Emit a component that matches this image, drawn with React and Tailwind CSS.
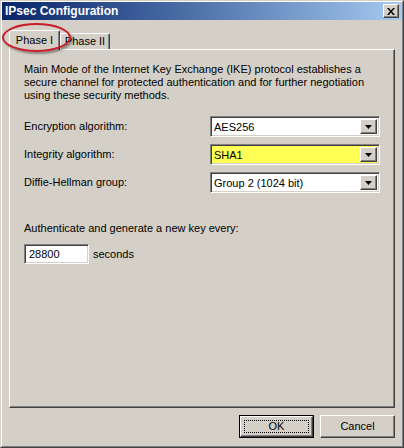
import React from 'react';

const FONT = "font-['Liberation_Sans',Arial,sans-serif]";

// classic 3D edges
const RAISED = 'border border-t-white border-l-white border-r-[#404040] border-b-[#404040] shadow-[inset_-1px_-1px_0_#808080]';
const SUNKEN = 'border border-t-[#808080] border-l-[#808080] border-r-white border-b-white shadow-[inset_1px_1px_0_#404040,inset_-1px_-1px_0_#d4d0c8]';

const Combo = ({ value, highlight }) => (
  <div className={`flex items-stretch w-[170px] h-[21px] ${SUNKEN} ${highlight ? 'bg-[#ffff55]' : 'bg-white'}`}>
    <div className="flex-1 flex items-center pl-[3px] pt-px text-[11px] leading-none">{value}</div>
    <div className={`w-[17px] m-[2px] flex items-center justify-center bg-[#d4d0c8] ${RAISED}`}>
      <svg width="7" height="4" viewBox="0 0 7 4">
        <path d="M0 0h7L3.5 4z" fill="#000" />
      </svg>
    </div>
  </div>
);

const Row = ({ label, value, highlight }) => (
  <div className="flex items-center justify-between">
    <span>{label}</span>
    <Combo value={value} highlight={highlight} />
  </div>
);

export default function App() {
  return (
    <div className={`${FONT} text-[11px] text-black w-[404px] h-[448px] bg-[#d4d0c8] border border-t-[#d4d0c8] border-l-[#d4d0c8] border-r-[#404040] border-b-[#404040]`}>
      <div className="relative h-full flex flex-col border border-t-white border-l-white border-r-[#808080] border-b-[#808080]">
        {/* title bar */}
        <div className="h-[18px] flex items-center justify-between pl-[3px] pr-[3px] bg-gradient-to-r from-[#0a246a] to-[#a6caf0]">
          <span className="text-white font-bold text-[12px] leading-none">IPsec Configuration</span>
          <div className={`w-[16px] h-[14px] flex items-center justify-center bg-[#d4d0c8] ${RAISED}`}>
            <svg width="8" height="7" viewBox="0 0 8 7">
              <path d="M0 0h2l2 2.5L6 0h2L5 3.5 8 7H6L4 4.5 2 7H0l3-3.5z" fill="#000" />
            </svg>
          </div>
        </div>

        {/* tabs */}
        <div className="mt-[10px] ml-[7px] flex items-start">
          <div className="relative z-10 -mb-px h-[20px] w-[51px] bg-[#d4d0c8] flex items-center justify-center rounded-t-[2px] border border-b-0 border-t-white border-l-white border-r-[#404040] shadow-[inset_-1px_0_0_#808080]">
            Phase I
          </div>
          <div className="mt-[3px] h-[16px] w-[50px] bg-[#d4d0c8] flex items-center justify-center rounded-t-[2px] border border-b-0 border-t-white border-l-white border-r-[#404040] shadow-[inset_-1px_0_0_#808080]">
            Phase II
          </div>
        </div>

        {/* panel */}
        <div className={`ml-[7px] w-[386px] h-[359px] pt-[13px] pl-[14px] pr-[14px] ${RAISED}`}>
          <p className="leading-[13px]">
            Main Mode of the Internet Key Exchange (IKE) protocol establishes a<br />
            secure channel for protected authentication and for further negotiation<br />
            using these security methods.
          </p>
          <div className="mt-[14px] flex flex-col gap-[7px]">
            <Row label="Encryption algorithm:" value="AES256" />
            <Row label="Integrity algorithm:" value="SHA1" highlight />
            <Row label="Diffie-Hellman group:" value="Group 2 (1024 bit)" />
          </div>
          <div className="mt-[29px] leading-[13px]">Authenticate and generate a new key every:</div>
          <div className="mt-[9px] flex items-center gap-[4px]">
            <div className={`w-[65px] h-[20px] bg-white flex items-center pl-[4px] ${SUNKEN}`}>28800</div>
            <span>seconds</span>
          </div>
        </div>

        {/* buttons */}
        <div className="mt-[7px] flex justify-end gap-[6px] pr-[7px]">
          <div className="w-[75px] h-[23px] border border-black bg-[#d4d0c8]">
            <div className={`h-full flex items-center justify-center p-[3px] ${RAISED}`}>
              <div className="w-full h-full flex items-center justify-center border border-dotted border-black">OK</div>
            </div>
          </div>
          <div className={`w-[75px] h-[23px] flex items-center justify-center bg-[#d4d0c8] ${RAISED}`}>Cancel</div>
        </div>

        {/* red annotation ring around the Phase I tab */}
        <div className="absolute left-[0px] top-[21px] w-[69px] h-[29px] rounded-[50%] border-2 border-[#c81e28] shadow-[2px_2px_2px_rgba(0,0,0,0.35)] z-20 pointer-events-none" />
      </div>
    </div>
  );
}
